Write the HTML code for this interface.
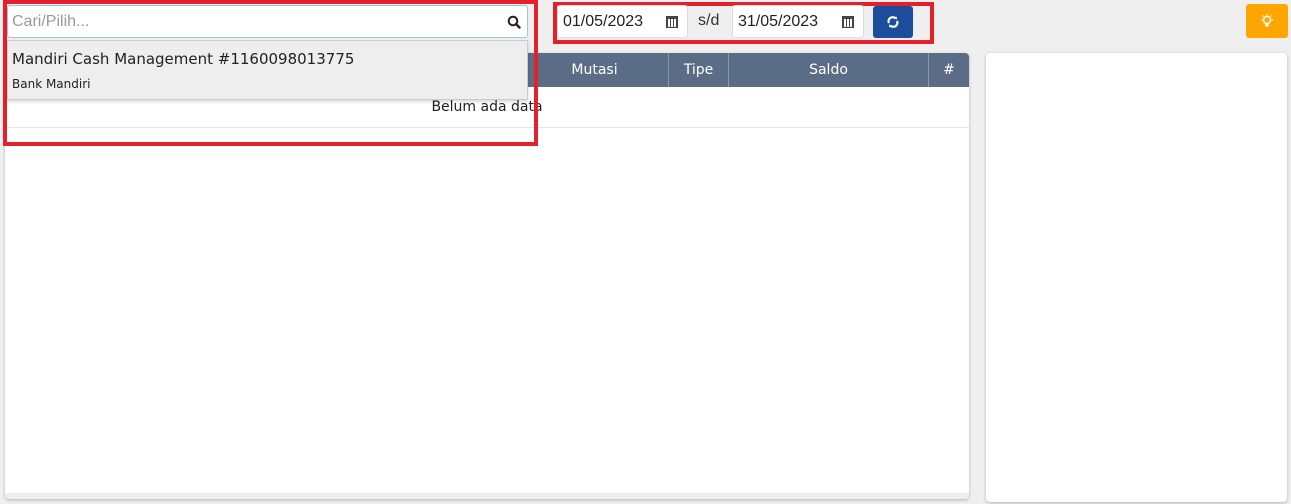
<!DOCTYPE html>
<html><head><meta charset="utf-8"><style>
*{box-sizing:border-box;margin:0;padding:0}
body{width:1291px;height:504px;background:#efefef;font-family:"Liberation Sans",sans-serif;position:relative;overflow:hidden}
.abs{position:absolute}
.panel{background:#fff;border-radius:4px;box-shadow:0 1px 3px rgba(0,0,0,.25)}
.th{position:absolute;top:0;height:34px;line-height:34px;color:#fff;text-align:center;border-left:1px solid #8a98ad;font-family:"DejaVu Sans",sans-serif;font-size:14px}
.inp{position:absolute;background:#fff;border:1px solid #ccc;border-radius:3px;font-size:16px;color:#222}
</style></head><body>
<div class="abs panel" style="left:5px;top:53px;width:964px;height:446px;overflow:hidden">
 <div class="abs" style="left:0;top:0;width:964px;height:34px;background:#5b6c86"></div>
 <div class="th" style="left:515px;width:149px;border-left:none">Mutasi</div>
 <div class="th" style="left:663px;width:60px">Tipe</div>
 <div class="th" style="left:723px;width:200px">Saldo</div>
 <div class="th" style="left:923px;width:41px">#</div>
 <div class="abs" style="left:0;top:34px;width:964px;height:41px;border-bottom:1px solid #e6e6e6;text-align:center;line-height:40px;color:#222;font-family:'DejaVu Sans',sans-serif;font-size:14px">Belum ada data</div>
 <div class="abs" style="left:0;top:440px;width:964px;height:6px;background:#eee"></div>
</div>
<div class="abs panel" style="left:986px;top:53px;width:301px;height:449px"></div>
<div class="abs" style="left:3px;top:0;width:535px;height:146px;border:4px solid #e3202b"></div>
<div class="inp" style="left:7px;top:5px;width:521px;height:33px;border-color:#9ec3e6;line-height:31px;padding-left:4px;color:#999">Cari/Pilih...
 <svg class="abs" style="right:6px;top:9px" width="14" height="14" viewBox="0 0 14 14"><circle cx="6" cy="6" r="4.3" fill="none" stroke="#222" stroke-width="2"/><path d="M9 9l3.5 3.5" stroke="#222" stroke-width="2.4" stroke-linecap="round"/></svg></div>
<div class="abs" style="left:7px;top:40px;width:521px;height:60px;background:#eee;border:1px solid #ccc;box-shadow:0 2px 3px rgba(0,0,0,.15);font-family:'DejaVu Sans',sans-serif">
 <div class="abs" style="left:4px;top:9px;font-size:15px;color:#222">Mandiri Cash Management #1160098013775</div>
 <div class="abs" style="left:4px;top:36px;font-size:12px;color:#222">Bank Mandiri</div>
</div>
<div class="abs" style="left:553px;top:2px;width:381px;height:42px;border:4px solid #e3202b"></div>
<div class="inp" style="left:557px;top:5px;width:131px;height:33px;line-height:31px;padding-left:5px;border-color:#ddd">01/05/2023<span class="abs" style="right:9px;top:10px;width:12px;height:12px;border:1px solid #444;border-top:3px solid #444;background:repeating-linear-gradient(90deg,#444 0 1px,#fff 1px 3px)"></span></div>
<div class="abs" style="left:698px;top:12px;font-size:16px;color:#333">s/d</div>
<div class="inp" style="left:732px;top:5px;width:132px;height:33px;line-height:31px;padding-left:5px;border-color:#ddd">31/05/2023<span class="abs" style="right:9px;top:10px;width:12px;height:12px;border:1px solid #444;border-top:3px solid #444;background:repeating-linear-gradient(90deg,#444 0 1px,#fff 1px 3px)"></span></div>
<div class="abs" style="left:873px;top:6px;width:40px;height:32px;background:#1c4d9c;border-radius:3px">
 <svg class="abs" style="left:13px;top:9px" width="14" height="14" viewBox="0 0 14 14"><path d="M3 8a4 4 0 0 1 6.5-4.5M11 6a4 4 0 0 1-6.5 4.5" fill="none" stroke="#fff" stroke-width="2.2"/><path d="M8 1.5l3 0.5-0.5 3zM6 12.5l-3-0.5 0.5-3z" fill="#fff"/></svg></div>
<div class="abs" style="left:1246px;top:4px;width:42px;height:34px;background:#ffa500;border-radius:3px">
 <svg class="abs" style="left:13px;top:9px" width="16" height="16" viewBox="0 0 16 16"><circle cx="8" cy="7" r="3.5" fill="none" stroke="#fff" stroke-width="1.4"/><rect x="6.3" y="10.5" width="3.4" height="3" fill="#fff"/><path d="M8 1v1.5M2 7h1.5M12.5 7H14M3.5 2.5l1 1M12.5 2.5l-1 1" stroke="#fff" stroke-width="1"/></svg></div>
</body></html>
